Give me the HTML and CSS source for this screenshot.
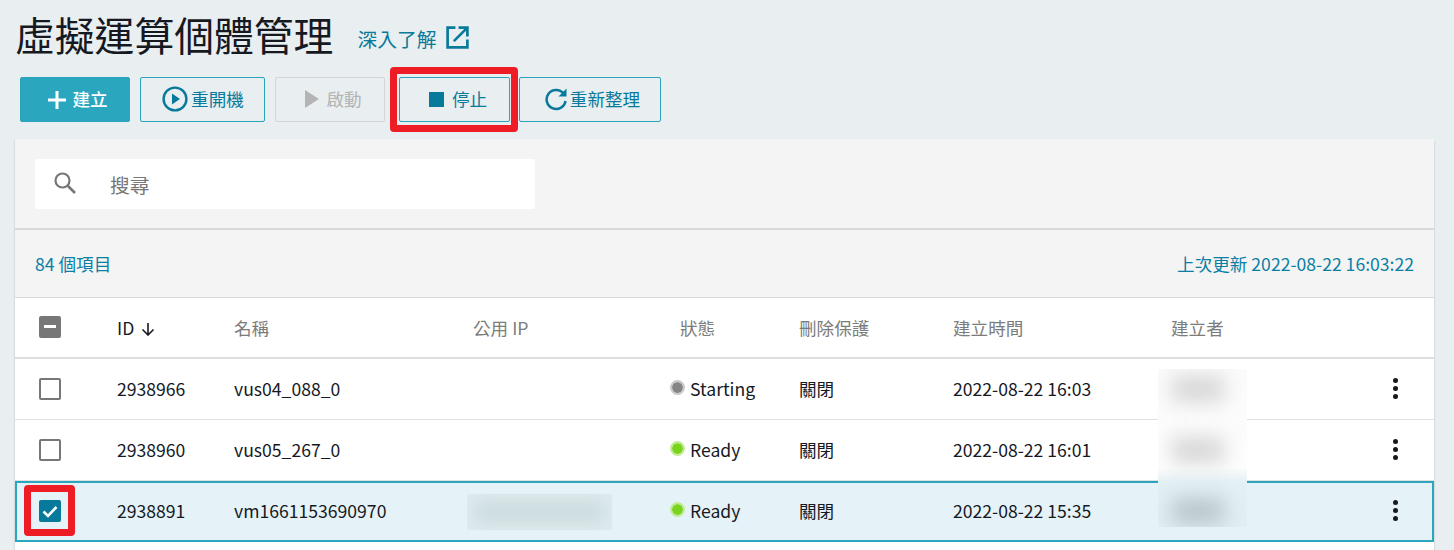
FILE: index.html
```html
<!DOCTYPE html>
<html lang="zh-Hant">
<head>
<meta charset="utf-8">
<title>虛擬運算個體管理</title>
<link rel="stylesheet" href="styles.css">
</head>
<body>
<header class="title-row">
  <h1 class="title">虛擬運算個體管理</h1>
  <a class="learn">深入了解
    <svg class="learn-icon" viewBox="0 0 24 24" fill="none" stroke="currentColor" stroke-width="2.6"><path d="M10 2.5H2.5v19h19V14"/><path d="M8.5 15.5 21 3M13 2.5h8.500V11"/></svg>
  </a>
</header>
<div class="toolbar">
  <button class="btn primary"><svg class="i-plus" viewBox="0 0 18 18"><path d="M9 0v18M0 9h18" stroke="currentColor" stroke-width="3"/></svg>建立</button>
  <button class="btn restart"><svg class="i-play" viewBox="0 0 26 26"><circle cx="13" cy="13" r="11.400" fill="none" stroke="currentColor" stroke-width="2.400"/><path d="M10 7.500 18 13l-8 5.500z" fill="currentColor"/></svg>重開機</button>
  <button class="btn disabled"><svg class="i-start" viewBox="0 0 14 18"><path d="M0 0 14 9 0 18z" fill="currentColor"/></svg>啟動</button>
  <span class="stop-wrap"><button class="btn stop"><span class="i-stop"></span>停止</button></span>
  <button class="btn refresh"><svg class="i-refresh" viewBox="0 0 24 24" fill="none"><path d="M19.500 6.500A9.500 9.500 0 1 0 21.500 14" stroke="currentColor" stroke-width="2.500"/><path d="M22.500 1.500v8h-8z" fill="currentColor"/></svg>重新整理</button>
</div>
<main class="card">
  <div class="search-bar">
    <div class="search">
      <svg class="i-search" viewBox="0 0 22 22" fill="none" stroke="currentColor"><circle cx="8.500" cy="8.500" r="7" stroke-width="2.200"/><path d="m13.500 13.500 7.500 7.500" stroke-width="2.600"/></svg>
      <span class="search-text">搜尋</span>
    </div>
  </div>
  <div class="meta">
    <span>84 個項目</span>
    <span>上次更新 2022-08-22 16:03:22</span>
  </div>
  <div class="row head">
    <span><span class="cb mixed"></span></span>
    <span class="id-head">ID <svg class="i-down" viewBox="0 0 14 14" fill="none" stroke="currentColor" stroke-width="1.600"><path d="M7 1v12M1.500 7.500 7 13l5.500-5.500"/></svg></span>
    <span>名稱</span>
    <span>公用 IP</span>
    <span class="status-head">狀態</span>
    <span>刪除保護</span>
    <span>建立時間</span>
    <span>建立者</span>
    <span></span>
  </div>
  <div class="row">
    <span><span class="cb"></span></span>
    <span>2938966</span><span>vus04_088_0</span><span></span>
    <span class="status"><i class="dot grey"></i>Starting</span>
    <span>關閉</span><span>2022-08-22 16:03</span><span></span>
    <span class="more"><i></i><i></i><i></i></span>
  </div>
  <div class="row">
    <span><span class="cb"></span></span>
    <span>2938960</span><span>vus05_267_0</span><span></span>
    <span class="status"><i class="dot green"></i>Ready</span>
    <span>關閉</span><span>2022-08-22 16:01</span><span></span>
    <span class="more"><i></i><i></i><i></i></span>
  </div>
  <div class="row selected">
    <span class="cb-wrap"><span class="cb checked"><svg viewBox="0 0 22 22" fill="none" stroke="#fff" stroke-width="2.600"><path d="m4.500 11.500 4.500 4.500 8.500-9"/></svg></span></span>
    <span>2938891</span><span>vm1661153690970</span>
    <span class="ip-cell"><span class="ip-blur"><i></i></span></span>
    <span class="status"><i class="dot green"></i>Ready</span>
    <span>關閉</span><span>2022-08-22 15:35</span><span></span>
    <span class="more"><i></i><i></i><i></i></span>
  </div>
  <div class="creator-blur"><i></i><i></i><i class="dark"></i></div>
</main>
</body>
</html>
```
FILE: styles.css
```css
* { box-sizing: border-box; }
html, body { height: 550px; overflow: hidden; }
body {
  margin: 0;
  background: #e9eef1;
  color: #16191f;
  font-family: "Noto Sans CJK TC", "Noto Sans", sans-serif;
  font-size: 17.6px;
}
.title-row {
  height: 67px;
  padding: 0 0 0 15px;
  display: flex;
  align-items: center;
  gap: 24px;
}
.title { margin: 0; font-size: 39.8px; font-weight: 400; line-height: 60px; }
.learn { display: flex; align-items: center; gap: 8px; color: #0a7a9a; font-size: 19.8px; padding-top: 10px; }
.learn-icon { width: 25px; height: 25px; margin-top: -2px; }
.toolbar { height: 72px; padding: 10px 0 0 20px; display: flex; align-items: flex-start; }
.btn {
  height: 45px;
  display: flex;
  align-items: center;
  justify-content: center;
  background: transparent;
  border: 1px solid #2aa4bd;
  border-radius: 2px;
  color: #077a9b;
  font: inherit;
  padding: 0 0 2px;
}
.primary { width: 110px; background: #2aa6be; color: #fff; font-weight: 500; gap: 6px; padding-left: 6px; margin-right: 10px; }
.primary .i-plus { margin-top: 2px; }
.restart { width: 125px; gap: 3px; padding-left: 1px; margin-right: 10px; }
.disabled { width: 110px; border-color: #d5d5d5; color: #b4b4b4; gap: 7px; padding-left: 7px; margin-right: 5px; }
.stop { width: 111px; gap: 8px; padding-left: 6px; }
.stop .i-stop { margin-left: 1px; }
.refresh { width: 142px; gap: 2px; padding-left: 4px; }
.i-start, .i-stop, .i-refresh, .i-play { margin-top: 1px; }
.stop-wrap { margin-top: -10px; padding: 3px 1px 2px 2px; border: 7px solid #ee1c25; border-radius: 4px; width: 128px; height: 65px; margin-right: 1px; }
.i-plus { width: 18px; height: 18px; }
.i-play { width: 26px; height: 26px; }
.i-start { width: 14px; height: 18px; }
.i-stop { width: 15px; height: 15px; background: #077a9b; }
.i-refresh { width: 24px; height: 24px; }
.card {
  position: relative;
  margin-left: 15px;
  width: 1419px;
  height: 420px;
  background: #fff;
  border-radius: 2px 2px 0 0;
  box-shadow: 0 1px 2px rgba(0,0,0,.28);
}
.search-bar { height: 91px; padding: 20px; background: #f4f4f4; border-bottom: 2px solid #d8d8d8; }
.search { width: 500px; height: 50px; background: #fff; border-radius: 2px; display: flex; align-items: center; padding-left: 19px; gap: 34px; color: #777; }
.i-search { width: 22px; height: 22px; margin-top: -3px; }
.search-text { font-size: 19.8px; }
.meta { height: 68px; padding: 0 20px; display: flex; justify-content: space-between; align-items: center; background: #f4f4f4; border-bottom: 1px solid #d8d8d8; color: #0a7fa3; font-size: 17.6px; }
.row {
  display: grid;
  grid-template-columns: 102px 117px 239px 198px 128px 154px 218px 224px 39px;
  height: 61px;
  align-items: center;
  border-bottom: 1px solid #e0e0e0;
  padding-bottom: 1px;
  position: relative;
}
.row > :first-child { padding-left: 24px; display: flex; }
.head { height: 61px; padding: 0 0 1px; border-bottom: 2px solid #dedede; color: #7c7c7c; font-size: 17.6px; }
.id-head { color: #16191f; display: flex; align-items: center; gap: 7px; }
.i-down { width: 14px; height: 14px; margin-top: 3px; }
.status-head { padding-left: 9px; }
.cb { display: block; position: relative; width: 22px; height: 22px; border: 2px solid #777; border-radius: 2px; background: #fff; }
.mixed { background: #777; }
.mixed::after { content: ""; position: absolute; left: 3px; right: 3px; top: 7px; height: 3px; background: #fff; }
.checked { background: #077a9b; border: none; }
.checked svg { display: block; width: 22px; height: 22px; }
.row > .cb-wrap { position: relative; }
.cb-wrap::before {
  content: "";
  box-sizing: border-box;
  position: absolute;
  left: 7px;
  top: -15px;
  width: 51px;
  height: 51px;
  border: 7px solid #ee1c25;
  border-radius: 4px;
}
.status { display: flex; align-items: center; gap: 5px; margin-left: -1px; }
.dot { width: 15px; height: 15px; border-radius: 50%; margin-top: -3px; background-clip: padding-box; border: 2px solid; }
.grey { background-color: #858585; border-color: #c9c9c9; }
.green { background-color: #7ad31d; border-color: #c3eb97; }
.more { display: flex; flex-direction: column; align-items: flex-start; gap: 3px; }
.more i { width: 5px; height: 5px; margin-left: -2px; border-radius: 50%; background: #16191f; }
.selected {
  height: 61px;
  background: #e5f3f8;
  border: 2px solid #2aa6be;
  padding: 0 0 2px;
  grid-template-columns: 100px 117px 239px 198px 128px 154px 218px 224px 37px;
}
.selected > .cb-wrap { padding-left: 22px; }
.cb-wrap .cb { z-index: 1; }
.ip-cell { display: block; height: 0; }
.ip-blur { display: block; position: absolute; left: 450px; top: 11px; width: 145px; height: 36px; background: #deebee; overflow: hidden; }
.ip-blur i { display: block; margin: 8px 8px; height: 20px; background: #cbdbde; filter: blur(8px); }
.creator-blur {
  position: absolute;
  left: 1143px;
  top: 230px;
  width: 89px;
  height: 158px;
  background: linear-gradient(#fbfbfb 0, #fdfdfd 62%, #e3f0f4 72%, #e1eef2 100%);
  overflow: hidden;
}
.creator-blur i { position: absolute; left: 14px; width: 52px; height: 26px; background: #d6d6d6; filter: blur(10px); }
.creator-blur i:nth-child(1) { top: 7px; }
.creator-blur i:nth-child(2) { top: 68px; }
.creator-blur i:nth-child(3) { top: 129px; }
.creator-blur .dark { background: #b8c6cb; }
```
